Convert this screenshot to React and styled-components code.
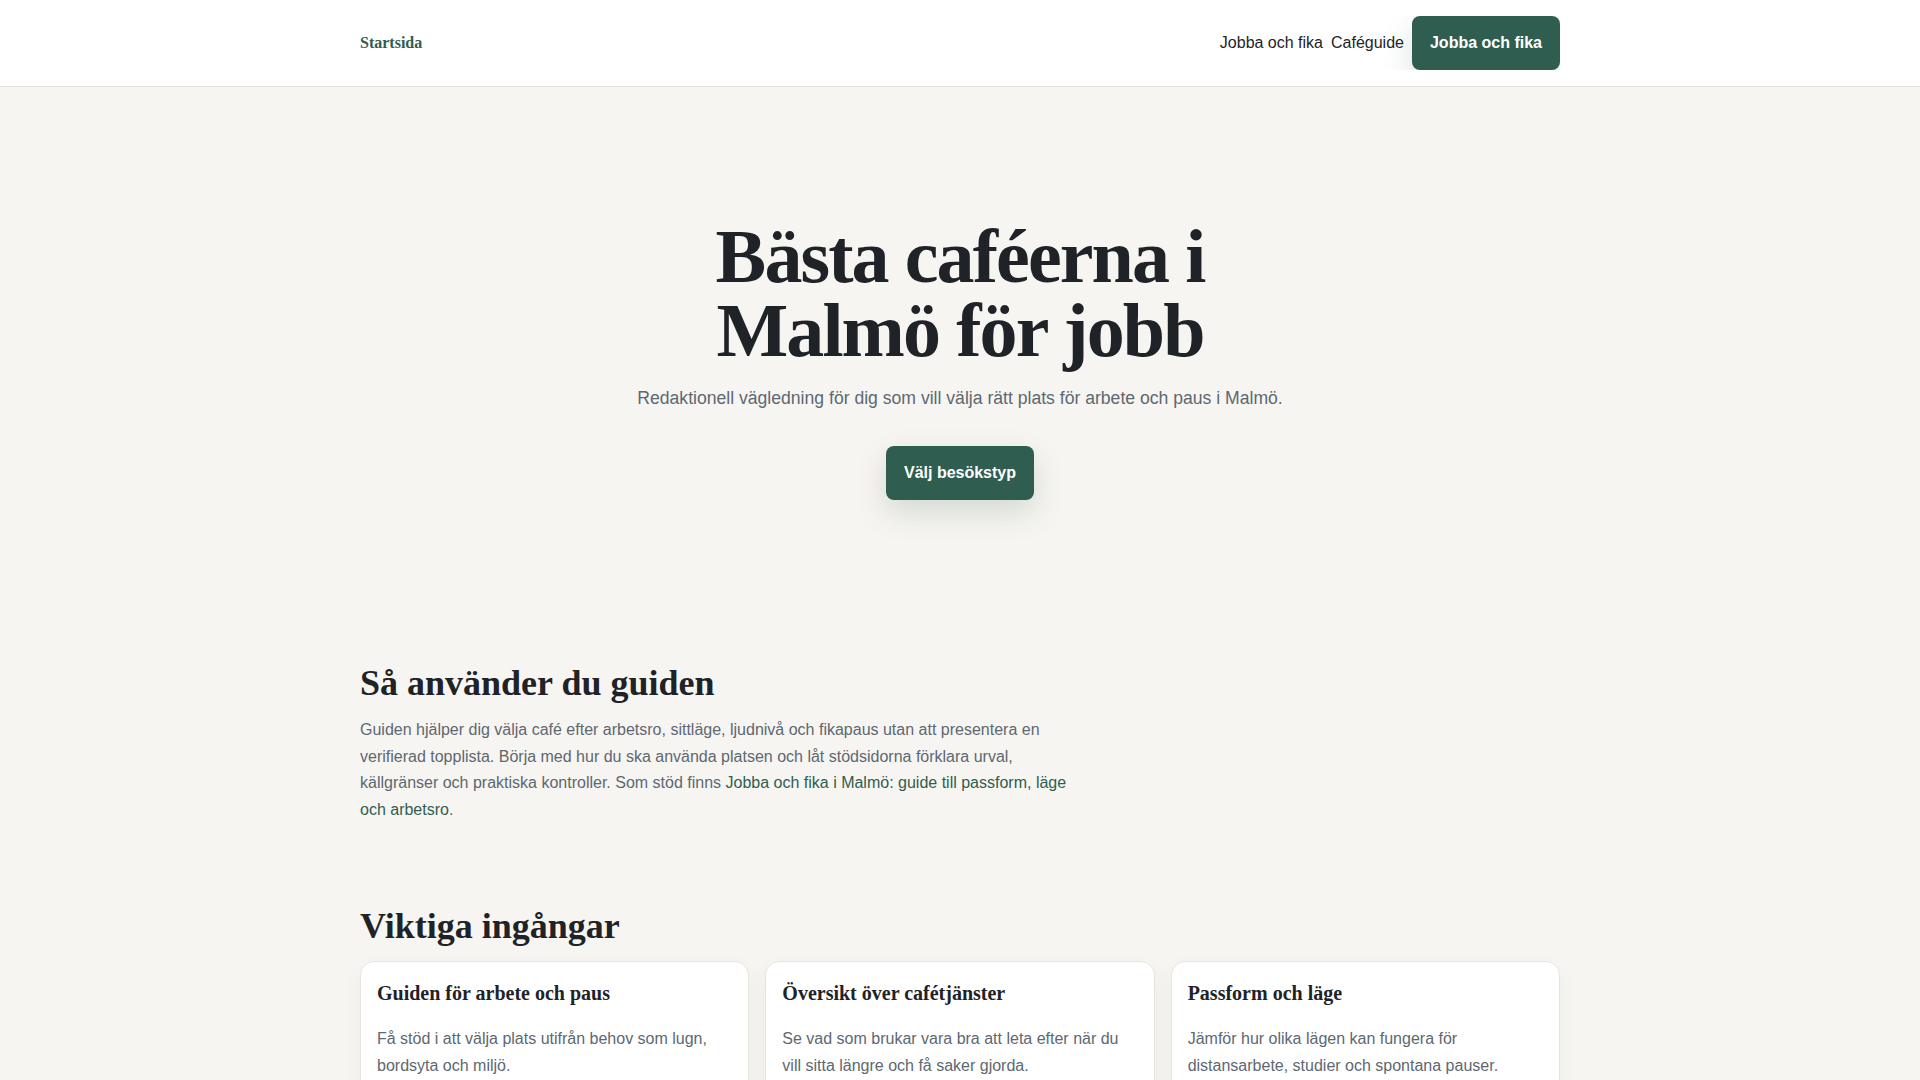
import React from "react";
import styled, { createGlobalStyle } from "styled-components";

const GlobalStyle = createGlobalStyle`
  * { box-sizing: border-box; }
  body {
    margin: 0;
    background: #f7f5f1;
    color: #1f2328;
    font-family: "Liberation Sans", Arial, sans-serif;
  }
`;

const serif = `"Liberation Serif", "Times New Roman", serif`;

const Header = styled.header`
  background: #ffffff;
  border-bottom: 1px solid #e6e3de;
`;

const Container = styled.div`
  width: min(1200px, calc(100% - 48px));
  margin: 0 auto;
`;

const HeaderInner = styled(Container)`
  display: flex;
  align-items: center;
  justify-content: space-between;
  padding: 16px 0;
`;

const Brand = styled.a`
  font-family: ${serif};
  font-weight: 700;
  font-size: 16px;
  color: #2f5e50;
  text-decoration: none;
`;

const Nav = styled.nav`
  display: flex;
  align-items: center;
  gap: 8px;
  overflow-x: auto;
`;

const NavLink = styled.a`
  font-size: 16px;
  color: #1f2328;
  text-decoration: none;
  white-space: nowrap;
`;

const Button = styled.a`
  display: inline-block;
  padding: 16px 18px;
  line-height: 22px;
  font-size: 16px;
  font-weight: 700;
  color: #ffffff;
  background: #2f5e50;
  border-radius: 8px;
  text-decoration: none;
  white-space: nowrap;
  box-shadow: 0 12px 30px rgba(47, 94, 80, 0.18);
`;

const Hero = styled.section`
  padding: 132px 0 162px;
  text-align: center;
`;

const Title = styled.h1`
  font-family: ${serif};
  font-weight: 700;
  font-size: 76px;
  line-height: 0.98;
  letter-spacing: -0.025em;
  max-width: 640px;
  margin: 0 auto 16px;
  color: #1f2328;
`;

const Lead = styled.p`
  font-size: 17.6px;
  line-height: 1.6;
  color: #5d6871;
  margin: 0 0 34px;
`;

const Section = styled.section`
  padding-bottom: ${(p) => p.$bottom || 0}px;
`;

const SectionTitle = styled.h2`
  font-family: ${serif};
  font-weight: 700;
  font-size: 36px;
  line-height: 1.2;
  margin: 0 0 ${(p) => p.$gap || 12}px;
  color: #1f2328;
`;

const Text = styled.p`
  max-width: 720px;
  margin: 0;
  font-size: 16px;
  line-height: 1.66;
  color: #5d6871;

  a {
    color: #2f5e50;
    text-decoration: none;
  }
`;

const Cards = styled.div`
  display: grid;
  grid-template-columns: repeat(3, 1fr);
  gap: 16px;
`;

const Card = styled.article`
  background: #ffffff;
  border: 1px solid #e8e5e0;
  border-radius: 14px;
  padding: 18px 16px 28px;
  box-shadow: 0 8px 24px rgba(31, 35, 40, 0.04);
`;

const CardTitle = styled.h3`
  font-family: ${serif};
  font-weight: 700;
  font-size: 20px;
  line-height: 1.3;
  margin: 0 0 19px;
  color: #1f2328;
`;

const CardText = styled.p`
  margin: 0;
  font-size: 16px;
  line-height: 1.7;
  color: #5d6871;
`;

const cards = [
  {
    title: "Guiden för arbete och paus",
    text: "Få stöd i att välja plats utifrån behov som lugn, bordsyta och miljö.",
  },
  {
    title: "Översikt över cafétjänster",
    text: "Se vad som brukar vara bra att leta efter när du vill sitta längre och få saker gjorda.",
  },
  {
    title: "Passform och läge",
    text: "Jämför hur olika lägen kan fungera för distansarbete, studier och spontana pauser.",
  },
];

export default function App() {
  return (
    <>
      <GlobalStyle />
      <Header>
        <HeaderInner>
          <Brand href="#">Startsida</Brand>
          <Nav>
            <NavLink href="#">Jobba och fika</NavLink>
            <NavLink href="#">Caféguide</NavLink>
            <Button href="#">Jobba och fika</Button>
          </Nav>
        </HeaderInner>
      </Header>

      <Hero>
        <Container>
          <Title>Bästa caféerna i Malmö för jobb</Title>
          <Lead>
            Redaktionell vägledning för dig som vill välja rätt plats för arbete och paus i Malmö.
          </Lead>
          <Button href="#">Välj besökstyp</Button>
        </Container>
      </Hero>

      <Section $bottom={82}>
        <Container>
          <SectionTitle>Så använder du guiden</SectionTitle>
          <Text>
            Guiden hjälper dig välja café efter arbetsro, sittläge, ljudnivå och fikapaus utan att
            presentera en verifierad topplista. Börja med hur du ska använda platsen och låt
            stödsidorna förklara urval, källgränser och praktiska kontroller. Som stöd finns{" "}
            <a href="#">Jobba och fika i Malmö: guide till passform, läge och arbetsro</a>.
          </Text>
        </Container>
      </Section>

      <Section $bottom={64}>
        <Container>
          <SectionTitle $gap={12}>Viktiga ingångar</SectionTitle>
          <Cards>
            {cards.map((c) => (
              <Card key={c.title}>
                <CardTitle>{c.title}</CardTitle>
                <CardText>{c.text}</CardText>
              </Card>
            ))}
          </Cards>
        </Container>
      </Section>
    </>
  );
}
